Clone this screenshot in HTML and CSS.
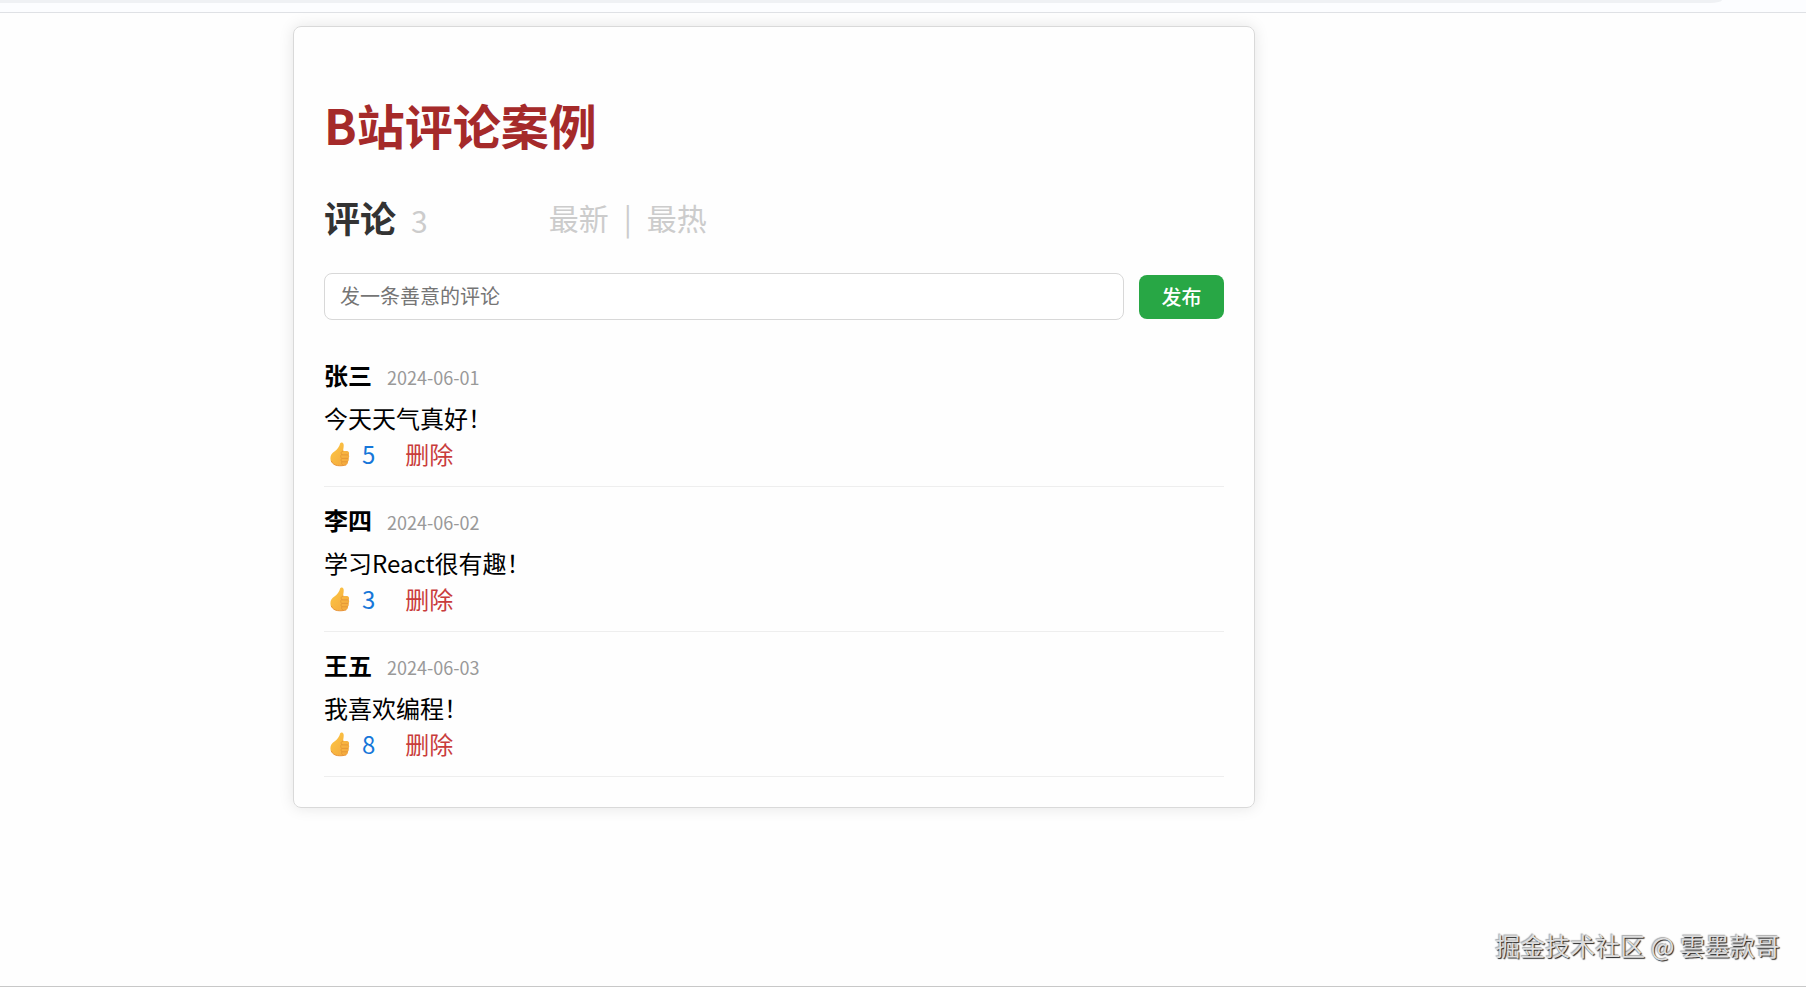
FILE: index.html
```html
<!DOCTYPE html>
<html lang="zh-CN">
<head>
  <meta charset="UTF-8">
  <meta name="viewport" content="width=device-width, initial-scale=1.0">
  <title>B站评论案例</title>
  <link rel="stylesheet" href="styles.css">
</head>
<body>

  <svg class="sprite" aria-hidden="true">
    <defs>
      <linearGradient id="skin" x1="0" y1="0" x2="1" y2="1">
        <stop offset="0" stop-color="#fdc843"/>
        <stop offset="1" stop-color="#f3a63e"/>
      </linearGradient>
    </defs>
    <symbol id="thumb" viewBox="0 0 20 25">
      <path fill="url(#skin)" d="M10.200 1.200c1-1.100 3-.6 3.400 1 .4 1.900-.3 4.600-.5 6.800h3.300c2.800 0 3.200 2.500 2.300 3.700.8 1.200.6 2.700-.2 3.500.6 1.200.3 2.600-.6 3.300.3 1.600-.6 3-2.100 3.500-2.500 1-7.300 1.200-9.600.3C3 22.300.4 19.600.4 16.200c0-3.200 1.600-5.200 4-6.700 2.700-1.700 5-5 5.800-8.300z"/>
      <path fill="none" stroke="#e39536" stroke-width=".9" stroke-linecap="round" d="M13.100 9c-2 .2-2.600 2-1.400 3.400M12.200 12.900h6M11.900 16.400h6.200M12 19.800h5.500M11.700 12.400c-1.400 1.200-1.300 3 .2 4-1.200 1-1.100 2.500.1 3.400-.8 1.100-.5 2.400.6 3.200"/>
      <path fill="none" stroke="#e8953a" stroke-width="1" stroke-linecap="round" d="M1.300 19.200c1.400 2.700 3.400 4 6.200 4.400 2.900.4 6.200.1 8.400-.6"/>
    </symbol>
  </svg>

  <div class="topbar"><div class="topbar-track"></div></div>

  <main class="container">
    <h1>B站评论案例</h1>

    <div class="header">
      <h2>评论</h2>
      <span class="count">3</span>
      <div class="sort">
        <button>最新</button>
        <span>|</span>
        <button>最热</button>
      </div>
    </div>

    <form class="comment-form">
      <input type="text" placeholder="发一条善意的评论" aria-label="发一条善意的评论">
      <button type="button">发布</button>
    </form>

    <ul class="comment-list">
      <li>
        <div class="meta"><strong>张三</strong><span class="date">2024-06-01</span></div>
        <p>今天天气真好！</p>
        <div class="actions">
          <button class="like"><svg><use href="#thumb"/></svg>5</button>
          <button class="delete">删除</button>
        </div>
      </li>
      <li>
        <div class="meta"><strong>李四</strong><span class="date">2024-06-02</span></div>
        <p>学习React很有趣！</p>
        <div class="actions">
          <button class="like"><svg><use href="#thumb"/></svg>3</button>
          <button class="delete">删除</button>
        </div>
      </li>
      <li>
        <div class="meta"><strong>王五</strong><span class="date">2024-06-03</span></div>
        <p>我喜欢编程！</p>
        <div class="actions">
          <button class="like"><svg><use href="#thumb"/></svg>8</button>
          <button class="delete">删除</button>
        </div>
      </li>
    </ul>
  </main>

  <footer class="footer">掘金技术社区 @ 雲墨款哥</footer>

</body>
</html>
```
FILE: styles.css
```css
* {
  box-sizing: border-box;
}

body {
  margin: 0;
  min-height: 100vh;
  display: flex;
  flex-direction: column;
  font-family: 'Noto Sans CJK SC', 'Noto Sans', sans-serif;
  font-size: 24px;
  line-height: 36px;
  color: #000;
  background-color: #fefefe;
  border-bottom: 1px solid #c8c8c8;
}

button,
input {
  font-family: inherit;
}

button {
  padding: 0;
  border: none;
  background: none;
  font-size: inherit;
  line-height: inherit;
  color: inherit;
  cursor: pointer;
}

.sprite {
  position: absolute;
  width: 0;
  height: 0;
}

/* Browser bar edge above the page */
.topbar {
  height: 13px;
  padding-right: 84px;
  background-color: #fcfdff;
  border-bottom: 1px solid #dfe1e5;
}

.topbar-track {
  height: 3px;
  background-color: #eff1f4;
  border-bottom-right-radius: 12px 3px;
}

.container {
  width: calc(100% - 320px);
  max-width: 962px;
  margin: 13px 0 0 293px;
  padding: 30px;
  border: 1px solid #d9d9d9;
  border-radius: 8px;
  box-shadow: 0 0 15px rgba(0, 0, 0, 0.1);
}

h1 {
  margin: 32px 0;
  font-size: 48px;
  line-height: 70px;
  color: #a52a2a;
}

.header {
  display: flex;
  align-items: baseline;
  margin-bottom: 27px;
  line-height: 52px;
}

h2 {
  margin: 0;
  font-size: 36px;
  color: #333;
}

.count {
  margin-left: 15px;
  font-size: 30px;
  color: #ccc;
}

.sort {
  display: flex;
  align-self: flex-start;
  gap: 15px;
  margin-left: 121px;
  font-size: 30px;
  color: #ccc;
}

.comment-form {
  display: flex;
  align-items: center;
  gap: 15px;
  margin-bottom: 22px;
}

.comment-form input {
  flex: 1;
  min-width: 0;
  height: 47px;
  padding: 0 15px 3px;
  border: 1px solid #d8d8d8;
  border-radius: 8px;
  font-size: 20px;
  background-color: #fff;
}

.comment-form input::placeholder {
  color: #757575;
}

.comment-form button {
  min-width: 85px;
  height: 44px;
  border-radius: 8px;
  font-size: 20px;
  font-weight: 500;
  color: #fff;
  background-color: #28a745;
}

.comment-list {
  margin: 0;
  padding: 0;
  list-style: none;
}

.comment-list li {
  padding: 15px 0 14px;
  border-bottom: 1px solid #eee;
}

.meta {
  display: flex;
  align-items: baseline;
  gap: 15px;
  margin-bottom: 5px;
}

.date {
  font-size: 18px;
  color: #999;
}

.comment-list p {
  margin: 0;
}

.actions {
  display: flex;
  gap: 30px;
}

.like {
  display: flex;
  align-items: center;
  gap: 12px;
  padding-left: 6px;
  color: #1677d9;
}

.like svg {
  width: 20px;
  height: 25px;
}

.delete {
  color: #c93c3c;
}

.footer {
  margin-top: auto;
  padding: 0 26px 23px;
  text-align: right;
  font-size: 25px;
  color: #ddd;
  text-shadow: 1px 1px 1px #222, -1px -1px 1px #aaa;
}
```
